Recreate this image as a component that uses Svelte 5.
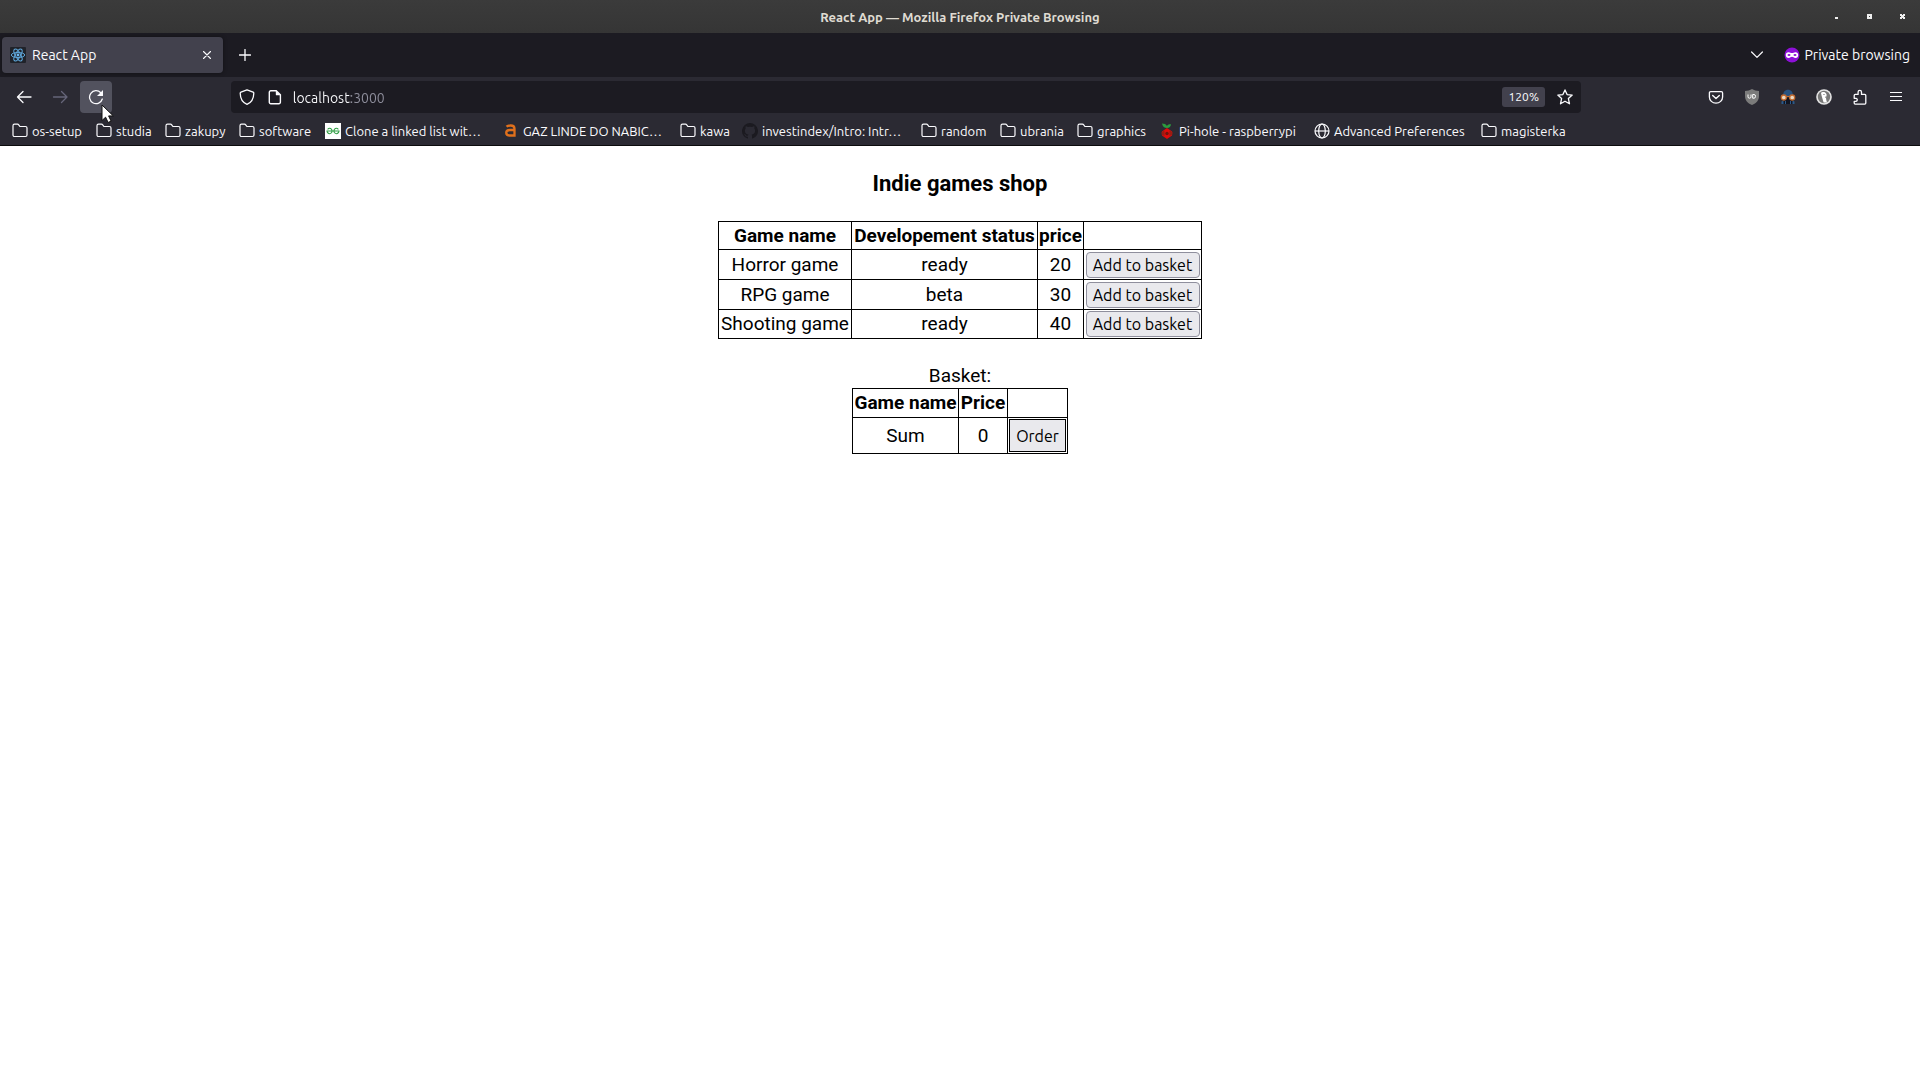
<script>
  const bookmarks = [
    { icon: 'folder', label: 'os-setup' },
    { icon: 'folder', label: 'studia' },
    { icon: 'folder', label: 'zakupy' },
    { icon: 'folder', label: 'software' },
    { icon: 'geeks', label: 'Clone a linked list wit…' },
    { icon: 'letter', label: 'GAZ LINDE DO NABIC…' },
    { icon: 'folder', label: 'kawa' },
    { icon: 'github', label: 'investindex/Intro: Intr…' },
    { icon: 'folder', label: 'random' },
    { icon: 'folder', label: 'ubrania' },
    { icon: 'folder', label: 'graphics' },
    { icon: 'pihole', label: 'Pi-hole - raspberrypi' },
    { icon: 'globe', label: 'Advanced Preferences' },
    { icon: 'folder', label: 'magisterka' },
  ];

  const games = [
    { name: 'Horror game', status: 'ready', price: 20 },
    { name: 'RPG game', status: 'beta', price: 30 },
    { name: 'Shooting game', status: 'ready', price: 40 },
  ];

  let basket = $state([]);
  const sum = $derived(basket.reduce((total, game) => total + game.price, 0));
  let address = $state('localhost:3000');
</script>

<div class="browser">
  <header class="titlebar">
    <span class="title">React App — Mozilla Firefox Private Browsing</span>
    <div class="window-controls">
      <button aria-label="Minimize"><svg width="5" height="5" viewBox="0 0 5 5"><path d="M1 3h3v2H1z" fill="#eee" /></svg></button>
      <button aria-label="Maximize"><svg width="5" height="5" viewBox="0 0 5 5"><path d="M0 0h5v5H0zM2 2v1h1V2z" fill="#eee" fill-rule="evenodd" /></svg></button>
      <button aria-label="Close window"><svg width="5" height="5" viewBox="0 0 5 5"><path d="M0 0h2v1h1V0h2v2H4v1h1v2H3V4H2v1H0V3h1V2H0z" fill="#eee" /></svg></button>
    </div>
  </header>

  <div class="tabstrip">
    <div class="tab">
      <svg width="16" height="16" viewBox="0 0 16 16">
        <rect width="16" height="16" rx="1" fill="#20232a" />
        <g fill="none" stroke="#5fa8dc" stroke-width="1">
          <ellipse cx="8" cy="8" rx="6.7" ry="2.6" />
          <ellipse cx="8" cy="8" rx="6.7" ry="2.6" transform="rotate(60 8 8)" />
          <ellipse cx="8" cy="8" rx="6.7" ry="2.6" transform="rotate(120 8 8)" />
        </g>
        <circle cx="8" cy="8" r="1.4" fill="#6cb8f0" />
      </svg>
      <span class="tab-label">React App</span>
      <button class="tab-close" aria-label="Close tab">
        <svg width="8" height="8" viewBox="0 0 8 8"><path d="M.5.5l7 7M7.5.5l-7 7" stroke="#fbfbfe" stroke-width="1.1" stroke-linecap="round" /></svg>
      </button>
    </div>
    <button class="tool" aria-label="New tab">
      <svg width="12" height="12" viewBox="0 0 12 12"><path d="M6 .5v11M.5 6h11" stroke="#fbfbfe" stroke-width="1.3" stroke-linecap="round" /></svg>
    </button>
    <button class="tool all-tabs" aria-label="List all tabs">
      <svg width="12" height="8" viewBox="0 0 12 8"><path d="M.6 1l5.4 5.4L11.4 1" fill="none" stroke="#fbfbfe" stroke-width="1.2" stroke-linecap="round" stroke-linejoin="round" /></svg>
    </button>
    <div class="private">
      <svg width="16" height="16" viewBox="0 0 16 16">
        <circle cx="8" cy="8" r="7.5" fill="#8d10d8" />
        <path d="M4.6 5.2C6 5.2 6.800 6 8 6s2-.8 3.400-.8c1.900 0 2.800 1.200 2.800 2.700 0 1.900-1.100 3-2.800 3-1.500 0-2.300-1.200-3.400-1.200s-1.900 1.200-3.400 1.200c-1.700 0-2.800-1.100-2.800-3 0-1.500.9-2.700 2.800-2.700z" fill="#fff" />
        <ellipse cx="5" cy="8" rx="1.500" ry="1" fill="#8d10d8" /><ellipse cx="11" cy="8" rx="1.500" ry="1" fill="#8d10d8" />
      </svg>
      <span>Private browsing</span>
    </div>
  </div>

  <nav class="navbar" aria-label="Navigation">
    <button class="tool" aria-label="Back">
      <svg width="16" height="16" viewBox="0 0 16 16"><path d="M15 8H1.500M7 2.500L1.500 8 7 13.500" fill="none" stroke="#fbfbfe" stroke-width="1.300" stroke-linecap="round" stroke-linejoin="round" /></svg>
    </button>
    <button class="tool" aria-label="Forward">
      <svg width="16" height="16" viewBox="0 0 16 16"><path d="M1.500 8H15M9.500 2.500L15 8l-5.500 5.500" fill="none" stroke="#66657a" stroke-width="1.300" stroke-linecap="round" stroke-linejoin="round" /></svg>
    </button>
    <button class="tool active" aria-label="Reload">
      <svg width="16" height="16" viewBox="0 0 16 16"><path d="M14.300 10A6.500 6.500 0 1 1 12.800 3.700" fill="none" stroke="#fbfbfe" stroke-width="1.300" stroke-linecap="round" /><path d="M15 1v5.400a.6.6 0 0 1-.6.600H9z" fill="#fbfbfe" /></svg>
      <svg class="cursor" width="14" height="20" viewBox="0 0 14 20"><path d="M1 1v15.500l3.600-3.300 2.500 5.300 3-1.400-2.500-5.200h4.700z" fill="#fff" stroke="#111" stroke-width="1" /></svg>
    </button>
    <div class="spring"></div>
    <div class="urlbar">
      <svg width="16" height="16" viewBox="0 0 16 16"><path d="M8 .8l6.100 2.400c.5.200.7.500.7 1C14.700 9.600 12.500 13.500 8 15.300 3.500 13.500 1.300 9.600 1.200 4.200c0-.5.200-.8.700-1z" fill="none" stroke="#fbfbfe" stroke-width="1.300" stroke-linejoin="round" /></svg>
      <svg width="16" height="16" viewBox="0 0 16 16"><path d="M3.800 1.700h5.400l4.200 4.200v7.300a1.500 1.500 0 0 1-1.500 1.500H3.800a1.500 1.500 0 0 1-1.500-1.500V3.200a1.500 1.500 0 0 1 1.500-1.500z" fill="none" stroke="#fbfbfe" stroke-width="1.400" /><path d="M8.800 1.500v3.900c0 .5.300.9.900.9h3.900z" fill="#fbfbfe" /></svg>
      <input class="address" aria-label="Address" bind:value={address} />
      <button class="zoom">120%</button>
      <button class="star" aria-label="Bookmark this page">
        <svg width="16" height="16" viewBox="0 0 16 16"><path d="M8 .9l2.100 4.700 5.100.5-3.800 3.500 1.100 5.200L8 12.200l-4.500 2.600 1.100-5.200L.8 6.100l5.100-.5z" fill="none" stroke="#fbfbfe" stroke-width="1.300" stroke-linejoin="round" /></svg>
      </button>
    </div>
    <div class="spring"></div>
    <button class="tool" aria-label="Save to Pocket">
      <svg width="16" height="16" viewBox="0 0 16 16"><path d="M2.700 2.600h10.600c.8 0 1.300.5 1.300 1.300V8a6.600 6.200 0 0 1-13.200 0V3.900c0-.8.500-1.300 1.300-1.300z" fill="none" stroke="#fbfbfe" stroke-width="1.300" /><path d="M4.700 6.400L8 9.500l3.300-3.100" fill="none" stroke="#fbfbfe" stroke-width="1.400" stroke-linecap="round" stroke-linejoin="round" /></svg>
    </button>
    <button class="tool" aria-label="uBlock Origin">
      <svg width="16" height="16" viewBox="0 0 16 16"><path d="M8 0c2 1.200 4.500 2 7 2v5c0 4.500-2.500 7-7 9-4.500-2-7-4.500-7-9V2c2.500 0 5-.8 7-2z" fill="#7b7b7b" /><path d="M4 5.500v2.300q0 1.400 1.500 1.400t1.500-1.400V5.500" fill="none" stroke="#fff" stroke-width="1" /><path d="M8.700 5.500v3.700h1.300a1.500 1.850 0 0 0 0-3.700z" fill="none" stroke="#fff" stroke-width="1" /></svg>
    </button>
    <button class="tool" aria-label="Privacy extension">
      <svg width="16" height="16" viewBox="0 0 16 16"><path d="M3 7C3 3 5 .8 8 .8S13 3 13 7z" fill="#28527f" /><path d="M2.500 9h11v6h-11z" fill="#111522" /><path d="M1.500 12.500l2-1V15h-2zM14.500 12.500l-2-1V15h2zM5 12h1v3H5zM10 12h1v3h-1z" fill="#2d5a8a" /><circle cx="3.800" cy="8.500" r="2.500" fill="#e9d9c4" stroke="#c36a2e" stroke-width="1.300" /><circle cx="12.200" cy="8.500" r="2.500" fill="#e9d9c4" stroke="#c36a2e" stroke-width="1.300" /><path d="M6.500 7.500h3" stroke="#c36a2e" /></svg>
    </button>
    <button class="tool" aria-label="DuckDuckGo">
      <svg width="16" height="16" viewBox="0 0 16 16"><circle cx="8" cy="8" r="7.800" fill="#e4e4e4" /><circle cx="8" cy="8" r="6.200" fill="#777" /><path d="M5 4c1-1.500 4.500-1.600 5.400 1 .5 1.500.1 2.400-.5 3.300.1 2 .6 3.700 1.100 5.300H7.600C7 11 5.500 7 5 4z" fill="#fff" /><path d="M9 7.500l2.500.5-2.500 1z" fill="#999" /><circle cx="8" cy="5.500" r=".6" fill="#555" /></svg>
    </button>
    <button class="tool" aria-label="Extensions">
      <svg width="16" height="16" viewBox="0 0 16 16"><path d="M2.200 9.300V6.400c0-.7.400-1 1-1h2.900V3.100a1.700 1.700 0 0 1 3.400 0v2.300h3.300c.6 0 1 .4 1 1v7.700c0 .6-.4 1-1 1H3.200c-.6 0-1-.4-1-1v-1.700h1.900a1.600 1.600 0 0 0 0-3.100z" fill="none" stroke="#fbfbfe" stroke-width="1.300" stroke-linejoin="round" /></svg>
    </button>
    <button class="tool" aria-label="Open application menu">
      <svg width="16" height="16" viewBox="0 0 16 16"><path d="M2 3.500h12M2 7.500h12M2 11.500h12" stroke="#fbfbfe" stroke-width="1.200" /></svg>
    </button>
  </nav>

  <nav class="bookmarks" aria-label="Bookmarks">
    {#each bookmarks as item}
      <a href="#{item.icon}">
        <svg width="16" height="16" viewBox="0 0 16 16">
          {#if item.icon === 'folder'}
            <path d="M1 12V2.700c0-.9.600-1.500 1.500-1.500h3c.5 0 .9.200 1.200.6L7.900 3.500h5.600c.9 0 1.500.6 1.500 1.500v7c0 .9-.6 1.500-1.500 1.500h-11C1.600 13.500 1 12.900 1 12z" fill="none" stroke="#fbfbfe" stroke-width="1.200" />
          {:else if item.icon === 'geeks'}
            <rect width="16" height="16" fill="#fff" />
            <path d="M2.600 6.400Q4.700 4.300 6.600 6.300 7.700 8 6.600 9.700 4.500 11.700 2.600 9.700 2.100 9 2 8h12q-.1 1-.6 1.700-1.900 2-4 0-1.100-1.700 0-3.400 1.900-2 4 .1" fill="none" stroke="#2f9e44" stroke-width="1.100" />
          {:else if item.icon === 'letter'}
            <path d="M3.500 4.200C4.500 3.300 6 3 7.700 3c2.600 0 3.800 1 3.800 3.200V13H7.300C4.700 13 3.200 12.200 3.200 10.200S4.900 7.500 7 7.500h4.500" fill="none" stroke="#e0701c" stroke-width="2.300" transform="translate(0 -.5)" />
          {:else if item.icon === 'github'}
            <path d="M8 0a8 8 0 0 0-2.500 15.600c.4.100.5-.2.500-.4v-1.500c-2.200.5-2.700-.9-2.700-.9-.4-.9-.9-1.200-.9-1.200-.7-.5.100-.5.100-.5.800.1 1.200.8 1.200.8.700 1.300 1.900.9 2.300.7.100-.5.300-.9.500-1.100-1.800-.2-3.600-.9-3.600-4 0-.8.300-1.600.8-2.100-.1-.2-.4-1 .1-2.100 0 0 .7-.2 2.200.8a7.500 7.500 0 0 1 4 0c1.500-1 2.200-.8 2.200-.8.500 1.100.2 1.900.1 2.100.5.500.8 1.300.8 2.100 0 3.100-1.900 3.800-3.600 4 .3.300.5.800.5 1.500v2.200c0 .2.100.5.500.4A8 8 0 0 0 8 0z" fill="#1b1a20" />
          {:else if item.icon === 'pihole'}
            <path d="M8 5C5.500 5 3.500 3.500 3 .5c2.500 0 4 .8 5 2.500C8.500 1.500 10 1 12 1.200 11.800 3.500 10.500 5 8 5z" fill="#2b9a3e" /><path d="M8 5l5 3.500v4L8 16l-5-3.500v-4z" fill="#e00b0b" /><path d="M2.500 9l3-1.500V13l-3-1.500zM13.500 9l-3-1.500V13l3-1.500z" fill="#9a1c12" /><circle cx="8" cy="10.500" r="1.700" fill="#70140d" />
          {:else}
            <g fill="none" stroke="#fbfbfe" stroke-width="1.200"><circle cx="8" cy="8" r="7" /><ellipse cx="8" cy="8" rx="3.300" ry="7" /><path d="M1 8h14" /></g>
          {/if}
        </svg>
        <span>{item.label}</span>
      </a>
    {/each}
  </nav>

  <main>
    <h3>Indie games shop</h3>
    <table class="shop">
      <thead>
        <tr><th class="name">Game name</th><th class="status">Developement status</th><th class="price">price</th><th class="action"></th></tr>
      </thead>
      <tbody>
        {#each games as game}
          <tr>
            <td>{game.name}</td>
            <td>{game.status}</td>
            <td>{game.price}</td>
            <td><button class="add" onclick={() => basket.push(game)}>Add to basket</button></td>
          </tr>
        {/each}
      </tbody>
    </table>

    <table class="basket">
      <caption>Basket:</caption>
      <thead>
        <tr><th class="item">Game name</th><th class="cost">Price</th><th class="submit"></th></tr>
      </thead>
      <tbody>
        {#each basket as game}
          <tr><td>{game.name}</td><td>{game.price}</td><td></td></tr>
        {/each}
        <tr><td>Sum</td><td>{sum}</td><td><button class="order">Order</button></td></tr>
      </tbody>
    </table>
  </main>
</div>

<style>
  :global(body) {
    margin: 0;
    background: #fff;
  }

  .browser {
    --ui: Ubuntu, "Noto Sans", sans-serif;
    color: #fbfbfe;
    font: 14px/20px var(--ui);
  }

  button {
    font-family: inherit;
    color: inherit;
    cursor: default;
  }

  svg {
    display: block;
    flex: none;
  }

  .titlebar {
    display: grid;
    grid-template-columns: 1fr auto 1fr;
    align-items: center;
    height: 33px;
    background: linear-gradient(#3b3b3b, #353535);
  }

  .title {
    grid-column: 2;
    font-size: 13px;
    font-weight: 600;
    color: #dfdbd2;
  }

  .window-controls {
    display: flex;
    justify-content: flex-end;
    gap: 12px;
    padding-right: 7px;
  }

  .window-controls button {
    display: grid;
    place-items: center;
    width: 21px;
    height: 21px;
    padding: 0;
    border: 0;
    background: none;
  }

  .tabstrip {
    display: flex;
    align-items: center;
    height: 44px;
    padding: 0 10px 0 2px;
    background: #1c1b22;
  }

  .tab {
    display: flex;
    align-items: center;
    gap: 6px;
    box-sizing: border-box;
    width: 221px;
    height: 36px;
    margin-right: 6px;
    padding: 0 4px 0 8px;
    border-radius: 4px;
    background: #42414d;
    box-shadow: 0 0 4px rgba(0, 0, 0, 0.4);
  }

  .tab-label {
    flex: 1;
  }

  .tab-close,
  .tool {
    display: grid;
    place-items: center;
    flex: none;
    padding: 0;
    border: 0;
    border-radius: 4px;
    background: none;
  }

  .tab-close {
    width: 24px;
    height: 24px;
  }

  .tool {
    width: 32px;
    height: 32px;
  }

  .all-tabs {
    margin-left: auto;
  }

  .private {
    display: flex;
    align-items: center;
    gap: 4px;
    margin-left: 11px;
  }

  .navbar {
    display: flex;
    align-items: center;
    gap: 4px;
    height: 32px;
    padding: 4px 8px 0;
    background: #2b2a33;
  }

  .active {
    position: relative;
    background: #52525e;
  }

  .cursor {
    position: absolute;
    top: 23px;
    left: 21px;
  }

  .spring {
    flex: 112 1 0;
  }

  .urlbar {
    display: flex;
    align-items: center;
    flex: 1350 1 0;
    gap: 12px;
    box-sizing: border-box;
    height: 32px;
    padding: 0 8px;
    border-radius: 4px;
    background: #1c1b22;
  }

  .address {
    flex: 1;
    min-width: 0;
    margin-left: -2px;
    padding: 1px 0 0;
    border: 0;
    outline: 0;
    background: linear-gradient(90deg, #fbfbfe 58px, #8f8f9d 58px);
    background-clip: text;
    color: transparent;
    font: 14px/20px var(--ui);
  }

  .zoom {
    width: 43px;
    height: 20px;
    padding: 0;
    border: 0;
    border-radius: 3px;
    background: #42414d;
    font-size: 12px;
    line-height: 20px;
  }

  .star {
    padding: 0;
    border: 0;
    background: none;
  }

  .bookmarks {
    display: grid;
    grid-template-columns: 84px 69px 74px 86px 178px 177px 62px 179px 79px 77px 82px 155px 167px 100px;
    align-items: center;
    height: 28px;
    padding: 4px 0 0 12px;
    border-bottom: 1px solid #0c0c0d;
    background: #2b2a33;
  }

  .bookmarks a {
    display: flex;
    align-items: center;
    gap: 4px;
    color: inherit;
    font-size: 13px;
    text-decoration: none;
    white-space: nowrap;
  }

  main {
    color: #000;
    font: 19px/22px Roboto, sans-serif;
    text-align: center;
  }

  h3 {
    margin: 0;
    padding: 24px 0;
    font-size: 22px;
    line-height: 27px;
  }

  table {
    margin: 0 auto;
    border-collapse: collapse;
    white-space: nowrap;
  }

  th,
  td {
    box-sizing: border-box;
    height: 29px;
    padding: 1px;
    border: 1px solid #000;
  }

  .shop th {
    height: 28px;
  }

  .shop tr:not(:last-child) td {
    height: 30px;
  }

  .name { width: 133px; }
  .status { width: 186px; }
  .price { width: 46px; }
  .action { width: 118px; }

  .basket {
    margin-top: 26px;
  }

  .basket caption {
    padding-bottom: 1px;
  }

  .basket td {
    height: 36px;
  }

  .item { width: 106px; }
  .cost { width: 49px; }
  .submit { width: 60px; }

  .add,
  .order {
    display: block;
    box-sizing: border-box;
    margin: 0 auto;
    padding: 0;
    background: #e9e9ed;
    color: #000;
    font-family: Ubuntu, "Noto Sans", sans-serif;
    font-size: 16px;
    line-height: 22px;
  }

  .add {
    width: 114px;
    height: 26px;
    border: 1px solid #8f8f9d;
    border-radius: 4px;
  }

  .order {
    width: 57px;
    height: 33px;
    border: 1px solid #000;
  }
</style>
